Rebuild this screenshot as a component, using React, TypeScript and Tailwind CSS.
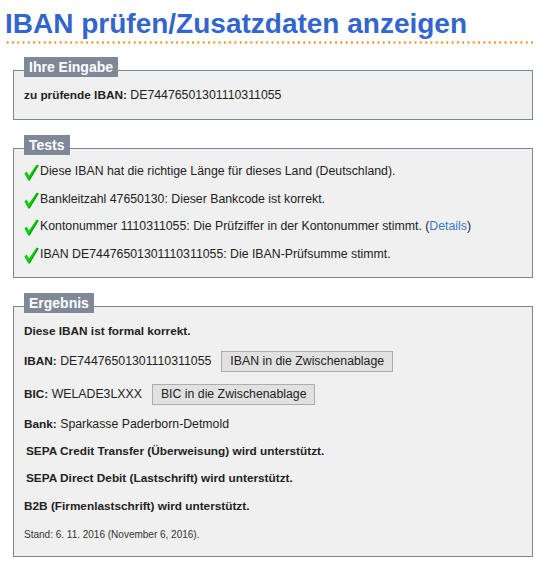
import React from 'react';

function Check() {
  return (
    <svg width="15" height="17" viewBox="0 0 15 17" className="shrink-0">
      <path d="M0.4 9.6 L2.6 7.6 L5 11.4 L12.6 0.5 L14.7 1.5 L5.6 16.5 L4.2 16.5 Z" fill="#10cc10" />
      <path d="M4.8 15.8 L13.7 1 L14.7 1.5 L5.6 16.5 Z" fill="#089c08" />
    </svg>
  );
}

function Box({ title, children, className = '' }: { title: string; children: React.ReactNode; className?: string }) {
  return (
    <fieldset className={`mx-[13px] border border-[#7d8595] bg-[#f0f0f0] px-[10px] ${className}`}>
      <legend className="relative -top-[3px] bg-[#7f8898] px-[5px] text-[14px] leading-[20px] font-bold text-white">
        {title}
      </legend>
      {children}
    </fieldset>
  );
}

function CopyButton({ children }: { children: React.ReactNode }) {
  return (
    <button className="ml-[10px] h-[21px] border border-[#adadad] bg-[#e1e1e1] px-[8px] text-[12.3px] leading-[19px] text-[#222]">
      {children}
    </button>
  );
}

export default function App() {
  const tests = [
    'Diese IBAN hat die richtige Länge für dieses Land (Deutschland).',
    'Bankleitzahl 47650130: Dieser Bankcode ist korrekt.',
    null,
    'IBAN DE74476501301110311055: Die IBAN-Prüfsumme stimmt.',
  ];

  return (
    <div
      className="min-h-[566px] w-[546px] bg-white text-[12.3px] text-[#222]"
      style={{ fontFamily: '"Liberation Sans", Arial, sans-serif' }}
    >
      <div className="px-[5px] pt-[7px]">
        <h1 className="text-[28px] leading-[34px] font-bold text-[#3366cc]">IBAN prüfen/Zusatzdaten anzeigen</h1>
        <div className="h-[3px] w-[528px] bg-[radial-gradient(circle,#ee9a33_1px,transparent_1.4px)] bg-[length:5.3px_3px] bg-repeat-x" />
      </div>

      {/* Eingabe */}
      <Box title="Ihre Eingabe" className="mt-[16px] pt-[8px] pb-[16px]">
        <p className="leading-[15px]">
          <b className="text-[11.8px]">zu prüfende IBAN:</b> DE74476501301110311055
        </p>
      </Box>

      {/* Tests */}
      <Box title="Tests" className="mt-[18px] pt-[6px] pb-[13px]">
        <div className="flex flex-col gap-[10.7px]">
          {tests.map((t, i) => (
            <div key={i} className="flex h-[17px] items-end gap-[1px] leading-[15px]">
              <Check />
              <span className="pb-[2px]">
                {t ?? (
                  <>
                    Kontonummer 1110311055: Die Prüfziffer in der Kontonummer stimmt. (
                    <a href="#" className="text-[#3a7bc8]">Details</a>)
                  </>
                )}
              </span>
            </div>
          ))}
        </div>
      </Box>

      {/* Ergebnis */}
      <Box title="Ergebnis" className="mt-[18px] pt-[7.5px] pb-[15.5px]">
        <div className="flex flex-col leading-[15px]">
          <p className="text-[11.8px] font-bold">Diese IBAN ist formal korrekt.</p>
          <div className="mt-[12px] flex items-center">
            <span>
              <b className="text-[11.8px]">IBAN:</b> DE74476501301110311055
            </span>
            <CopyButton>IBAN in die Zwischenablage</CopyButton>
          </div>
          <div className="mt-[12.5px] flex items-center">
            <span>
              <b className="text-[11.8px]">BIC:</b> WELADE3LXXX
            </span>
            <CopyButton>BIC in die Zwischenablage</CopyButton>
          </div>
          <p className="mt-[11.5px]">
            <b className="text-[11.8px]">Bank:</b> Sparkasse Paderborn-Detmold
          </p>
          <p className="mt-[12px] pl-[2px] text-[11.8px] font-bold">SEPA Credit Transfer (Überweisung) wird unterstützt.</p>
          <p className="mt-[12px] pl-[2px] text-[11.8px] font-bold">SEPA Direct Debit (Lastschrift) wird unterstützt.</p>
          <p className="mt-[13px] text-[11.8px] font-bold">B2B (Firmenlastschrift) wird unterstützt.</p>
          <p className="mt-[14px] text-[10px] leading-[13px] text-[#333]">Stand: 6. 11. 2016 (November 6, 2016).</p>
        </div>
      </Box>
    </div>
  );
}
